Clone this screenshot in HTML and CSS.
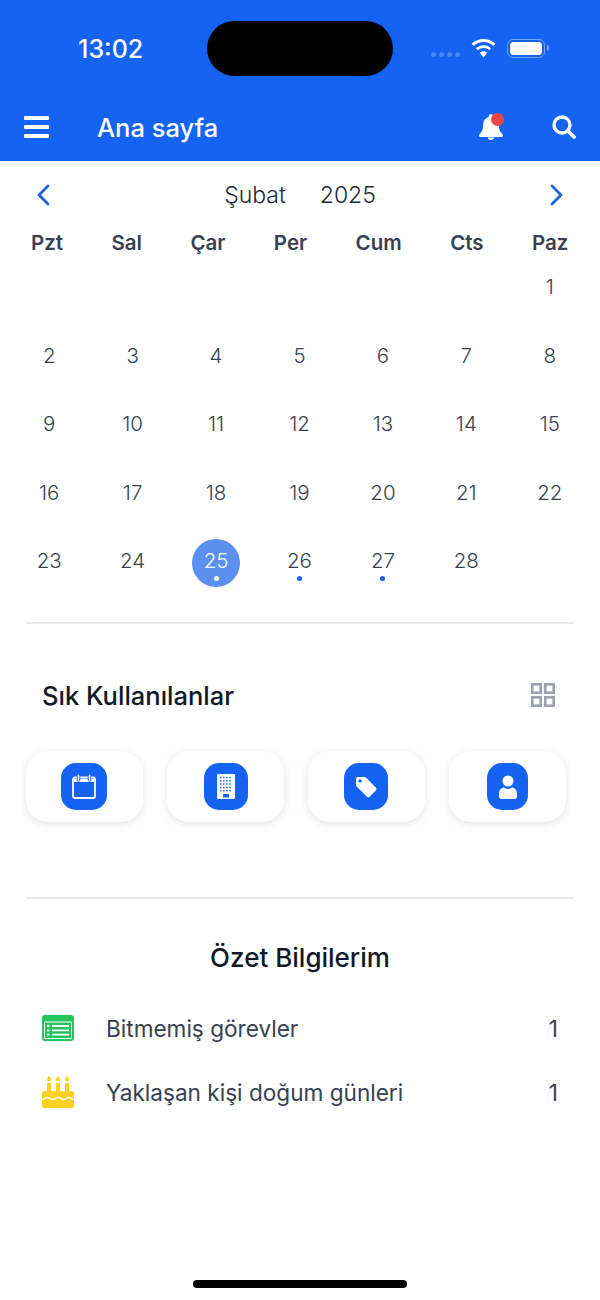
FILE: index.html
```html
<!DOCTYPE html>
<html>
<head>
    <title>Ana sayfa</title>
    <link rel="stylesheet" href="styles.css">
</head>
<body>
    <div class="screen">
        <header class="topbar">
            <div class="status">
                <span class="clock">13:02</span>
                <span class="island"></span>
                <span class="signal"><i></i><i></i><i></i><i></i></span>
                <svg class="wifi" viewBox="0 0 25 19" width="25" height="19">
                    <path d="M12.5 0C7.9 0 3.7 1.8.6 4.8l2 2.1C5.2 4.4 8.7 2.9 12.5 2.9s7.3 1.5 9.9 4l2-2.1C21.3 1.8 17.1 0 12.5 0z" fill="#fff"/>
                    <path d="M12.5 6.2c-3 0-5.6 1.1-7.6 3l2 2.1c1.5-1.4 3.4-2.2 5.6-2.2s4.100.8 5.600 2.200l2-2.100c-2-1.900-4.600-3-7.600-3z" fill="#fff"/>
                    <path d="M12.500 12.200c-1.500 0-2.800.6-3.800 1.500l3.800 4.800 3.800-4.800c-1-.9-2.300-1.500-3.800-1.500z" fill="#fff"/>
                </svg>
                <span class="battery"><span class="battery-level"></span></span>
            </div>
            <div class="toolbar">
                <span class="burger"><i></i><i></i><i></i></span>
                <span class="page-title">Ana sayfa</span>
                <span class="bell">
                    <svg viewBox="0 0 24 26" width="24" height="26">
                        <path d="M12 0c-1.300 0-2.200 1-2.200 2.200v.9C6.300 4.100 4.200 7.100 4.200 10.800c0 5.200-1.500 7-3 8.600-.6.600-1.200 1.200-1.200 2 0 .9.700 1.600 1.700 1.600h20.600c1 0 1.700-.7 1.700-1.600 0-.8-.6-1.400-1.200-2-1.500-1.600-3-3.400-3-8.600 0-3.700-2.100-6.700-5.600-7.700v-.9C14.200 1 13.300 0 12 0z" fill="#fff"/>
                        <path d="M8.800 23.600h6.400c0 1.400-1.400 2.400-3.200 2.400s-3.200-1-3.200-2.400z" fill="#fff"/>
                    </svg>
                    <span class="bell-dot"></span>
                </span>
                <svg class="search" viewBox="0 0 24 24" width="24" height="24">
                    <circle cx="10" cy="10" r="8" fill="none" stroke="#fff" stroke-width="3.400"/>
                    <path d="M16 16l6 6" stroke="#fff" stroke-width="3.800" stroke-linecap="round"/>
                </svg>
            </div>
        </header>

        <div class="month-nav">
            <svg class="chevron" viewBox="0 0 14 22" width="14" height="22"><path d="M12 2L3 11l9 9" fill="none" stroke="#1a62e0" stroke-width="2.800" stroke-linecap="round" stroke-linejoin="round"/></svg>
            <div class="month-label"><span>Şubat</span><span>2025</span></div>
            <svg class="chevron" viewBox="0 0 14 22" width="14" height="22"><path d="M2 2l9 9-9 9" fill="none" stroke="#1a62e0" stroke-width="2.800" stroke-linecap="round" stroke-linejoin="round"/></svg>
        </div>

        <div class="weekdays">
            <span>Pzt</span><span>Sal</span><span>Çar</span><span>Per</span><span>Cum</span><span>Cts</span><span>Paz</span>
        </div>

        <div class="days">
            <span class="day"></span><span class="day"></span><span class="day"></span><span class="day"></span><span class="day"></span><span class="day"></span><span class="day">1</span>
            <span class="day">2</span><span class="day">3</span><span class="day">4</span><span class="day">5</span><span class="day">6</span><span class="day">7</span><span class="day">8</span>
            <span class="day">9</span><span class="day">10</span><span class="day">11</span><span class="day">12</span><span class="day">13</span><span class="day">14</span><span class="day">15</span>
            <span class="day">16</span><span class="day">17</span><span class="day">18</span><span class="day">19</span><span class="day">20</span><span class="day">21</span><span class="day">22</span>
            <span class="day">23</span><span class="day">24</span><span class="day today">25</span><span class="day marked">26</span><span class="day marked">27</span><span class="day">28</span><span class="day"></span>
        </div>

        <hr class="divider first">

        <div class="fav-head">
            <h2>Sık Kullanılanlar</h2>
            <svg viewBox="0 0 24 24" width="24" height="24">
                <g fill="none" stroke="#9ca3af" stroke-width="2.600">
                    <rect x="1.300" y="1.300" width="8.400" height="8.400"/>
                    <rect x="14.300" y="1.300" width="8.400" height="8.400"/>
                    <rect x="1.300" y="14.300" width="8.400" height="8.400"/>
                    <rect x="14.300" y="14.300" width="8.400" height="8.400"/>
                </g>
            </svg>
        </div>

        <div class="favs">
            <div class="fav">
                <span class="fav-icon wide">
                    <svg viewBox="0 0 24 25" width="24" height="25">
                        <rect x="1" y="3.500" width="22" height="20.500" rx="2" fill="none" stroke="#fff" stroke-width="1.800"/>
                        <path d="M1 6.500h22" stroke="#fff" stroke-width="3"/>
                        <path d="M6.500 1.500v4.500M17.500 1.500v4.500" stroke="#1463f3" stroke-width="3.600" stroke-linecap="round"/>
                        <path d="M6.500 1.500v4.500M17.500 1.500v4.500" stroke="#fff" stroke-width="1.800" stroke-linecap="round"/>
                    </svg>
                </span>
            </div>
            <div class="fav">
                <span class="fav-icon">
                    <svg viewBox="0 0 18 25" width="18" height="25">
                        <rect width="18" height="25" rx="1" fill="#fff"/>
                        <path d="M3 3.500h12M3 6.800h12M3 10.100h12M3 13.400h12M3 16.700h12" stroke="#1463f3" stroke-width="1.500" stroke-dasharray="1.500 1.600"/>
                        <rect x="6" y="20" width="6" height="3.500" fill="#1463f3"/>
                    </svg>
                </span>
            </div>
            <div class="fav">
                <span class="fav-icon tag">
                    <svg viewBox="0 0 22 22" width="22" height="22">
                        <path d="M1 3C1 1.800 1.800 1 3 1h6.500c.6 0 1.200.3 1.700.7l9.800 10c.7.800.7 1.900 0 2.600l-6.300 6.400c-.8.800-2 .8-2.700 0l-10-9.900C1.300 10.300 1 9.700 1 9.100z" fill="#fff"/>
                        <circle cx="5" cy="5" r="1.700" fill="#1463f3"/>
                    </svg>
                </span>
            </div>
            <div class="fav">
                <span class="fav-icon narrow">
                    <svg viewBox="0 0 18 24" width="18" height="24">
                        <circle cx="9" cy="6" r="5.500" fill="#fff"/>
                        <path d="M0 19c0-4 2.500-6.500 5-6.500 1 .9 2.400 1.400 4 1.400s3-.5 4-1.400c2.500 0 5 2.500 5 6.500v2.500c0 1.400-1 2.500-2.500 2.500h-13C1 24 0 22.900 0 21.500z" fill="#fff"/>
                    </svg>
                </span>
            </div>
        </div>

        <hr class="divider second">

        <h2 class="summary-title">Özet Bilgilerim</h2>

        <div class="summary-row">
            <svg class="summary-icon" viewBox="0 0 32 26" width="32" height="26">
                <rect width="32" height="26" rx="3" fill="#22c55e"/>
                <path d="M2.500 7h27v16.500h-27z" fill="none" stroke="#fff" stroke-width="1"/>
                <path d="M10 11h17M10 15.300h17M10 19.600h17" stroke="#fff" stroke-width="1.800"/>
                <path d="M5 11h2.500M5 15.300h2.500M5 19.600h2.500" stroke="#fff" stroke-width="1.800"/>
            </svg>
            <span class="summary-label">Bitmemiş görevler</span>
            <span class="summary-count">1</span>
        </div>
        <div class="summary-row">
            <svg class="summary-icon" viewBox="0 0 32 32" width="32" height="32">
                <g fill="#fdd023">
                    <path d="M7 0c1.300 1.500 2 2.500 2 3.500S8.100 5.500 7 5.500 5 4.500 5 3.500 5.700 1.500 7 0z"/>
                    <path d="M16 0c1.300 1.500 2 2.500 2 3.500S17.100 5.500 16 5.500 14 4.500 14 3.500 14.700 1.500 16 0z"/>
                    <path d="M25 0c1.300 1.500 2 2.500 2 3.500S26.100 5.500 25 5.500 23 4.500 23 3.500 23.700 1.500 25 0z"/>
                    <rect x="5" y="7" width="4" height="10"/>
                    <rect x="14" y="7" width="4" height="10"/>
                    <rect x="23" y="7" width="4" height="10"/>
                    <path d="M2 15h28c1 0 2 1 2 2v5H0v-5c0-1 1-2 2-2z"/>
                    <path d="M0 22h32v8c0 1-1 2-2 2H2c-1 0-2-1-2-2z"/>
                </g>
                <path d="M0 23.500c2.700 0 2.700-2 5.300-2s2.700 2 5.400 2 2.600-2 5.300-2 2.700 2 5.300 2 2.700-2 5.400-2 2.600 2 5.300 2" fill="none" stroke="#fff" stroke-width="1.500"/>
            </svg>
            <span class="summary-label">Yaklaşan kişi doğum günleri</span>
            <span class="summary-count">1</span>
        </div>

        <div class="home-bar"></div>
    </div>
</body>
</html>
```

FILE: styles.css
```css
* {
    box-sizing: border-box;
}
body {
    margin: 0;
    font-family: Inter, "Noto Sans", sans-serif;
    background: #fff;
}
.screen {
    width: 600px;
    height: 1300px;
    position: relative;
    overflow: hidden;
}
.topbar {
    height: 161px;
    background: #1463f3;
    color: #fff;
}
.status {
    height: 94px;
    padding: 21px 53px 0 78px;
    display: flex;
    align-items: flex-start;
}
.clock {
    width: 129px;
    font-size: 25px;
    font-weight: 500;
    line-height: 56px;
}
.island {
    width: 186px;
    height: 55px;
    background: #000;
    border-radius: 28px;
}
.signal {
    display: flex;
    gap: 3px;
    margin: 31px 0 0 38px;
}
.signal i {
    width: 5px;
    height: 5px;
    border-radius: 50%;
    background: #4c89f5;
}
.wifi {
    margin: 18px 0 0 11px;
}
.battery {
    width: 38px;
    height: 19px;
    margin: 18px 0 0 11px;
    padding: 2px;
    border: 1.500px solid #76a5f8;
    border-radius: 6px;
    position: relative;
}
.battery::after {
    content: "";
    position: absolute;
    right: -5px;
    top: 5px;
    width: 2px;
    height: 6px;
    background: #76a5f8;
    border-radius: 0 2px 2px 0;
}
.battery-level {
    display: block;
    height: 100%;
    background: #fff;
    border-radius: 3.500px;
}
.toolbar {
    height: 66px;
    padding: 0 24px;
    display: flex;
    align-items: center;
}
.burger {
    width: 25px;
    display: flex;
    flex-direction: column;
    gap: 5px;
}
.burger i {
    height: 4px;
    background: #fff;
    border-radius: 1px;
}
.page-title {
    margin-left: 48px;
    font-size: 25.500px;
    font-weight: 500;
    flex: 1;
}
.bell {
    position: relative;
    width: 24px;
    height: 26px;
    margin-right: 49px;
}
.bell svg {
    display: block;
}
.bell-dot {
    position: absolute;
    left: 12px;
    top: -1px;
    width: 13px;
    height: 13px;
    border-radius: 50%;
    background: #ef4444;
}
.month-nav {
    height: 67px;
    padding: 0 36px;
    display: flex;
    align-items: center;
    justify-content: space-between;
}
.month-label {
    display: flex;
    gap: 34px;
    font-size: 23px;
    font-weight: 300;
    color: #1f2937;
}
.weekdays {
    height: 28px;
    padding: 0 31.500px 0 31px;
    display: flex;
    align-items: center;
    justify-content: space-between;
    font-size: 20.500px;
    font-weight: 600;
    color: #374151;
}
.days {
    margin: 9px 8.500px 0 7.500px;
    display: grid;
    grid-template-columns: repeat(7, 1fr);
    grid-auto-rows: 68.500px;
    justify-items: center;
}
.day {
    position: relative;
    width: 48px;
    height: 48px;
    text-align: center;
    line-height: 44px;
    font-size: 20.500px;
    font-weight: 300;
    color: #374151;
}
.today {
    background: #5b8ff0;
    border-radius: 50%;
    color: #fff;
}
.today::after,
.marked::after {
    content: "";
    position: absolute;
    left: 21.500px;
    bottom: 6.500px;
    width: 5px;
    height: 5px;
    border-radius: 50%;
    background: #1463f3;
}
.today::after {
    background: #fff;
}
.divider {
    margin: 0 26px;
    border: 0;
    border-top: 2px solid #e5e7eb;
}
.divider.first {
    margin-top: 14.500px;
}
.divider.second {
    margin-top: 75px;
}
.fav-head {
    margin-top: 48px;
    height: 46px;
    padding: 0 45px 0 42px;
    display: flex;
    align-items: center;
    justify-content: space-between;
}
.fav-head h2,
.summary-title {
    margin: 0;
    font-size: 25.500px;
    font-weight: 500;
    color: #111827;
}
.favs {
    margin-top: 33px;
    padding-left: 26px;
    display: grid;
    grid-template-columns: repeat(4, 117px);
    gap: 24px;
}
.fav {
    height: 71px;
    background: #fff;
    border-radius: 22px;
    box-shadow: 0 2px 9px rgba(0, 0, 0, 0.12);
    display: flex;
    align-items: center;
    justify-content: center;
}
.fav-icon {
    width: 44px;
    height: 47px;
    background: #1463f3;
    border-radius: 15px;
    display: flex;
    align-items: center;
    justify-content: center;
}
.fav-icon.wide {
    width: 46px;
    margin-right: 1px;
}
.fav-icon.tag {
    margin-right: 1px;
}
.fav-icon.narrow {
    width: 41px;
}
.summary-title {
    margin-top: 43px;
    text-align: center;
    line-height: 32px;
    font-size: 26px;
}
.summary-row {
    height: 64px;
    padding: 0 42px;
    display: flex;
    align-items: center;
    font-size: 22.600px;
    color: #374151;
}
.summary-title + .summary-row {
    margin-top: 22px;
}
.summary-icon {
    flex: none;
}
.summary-label {
    margin-left: 32px;
    flex: 1;
}
.home-bar {
    position: absolute;
    left: 193px;
    bottom: 12px;
    width: 214px;
    height: 8px;
    background: #000;
    border-radius: 4px;
}
```
